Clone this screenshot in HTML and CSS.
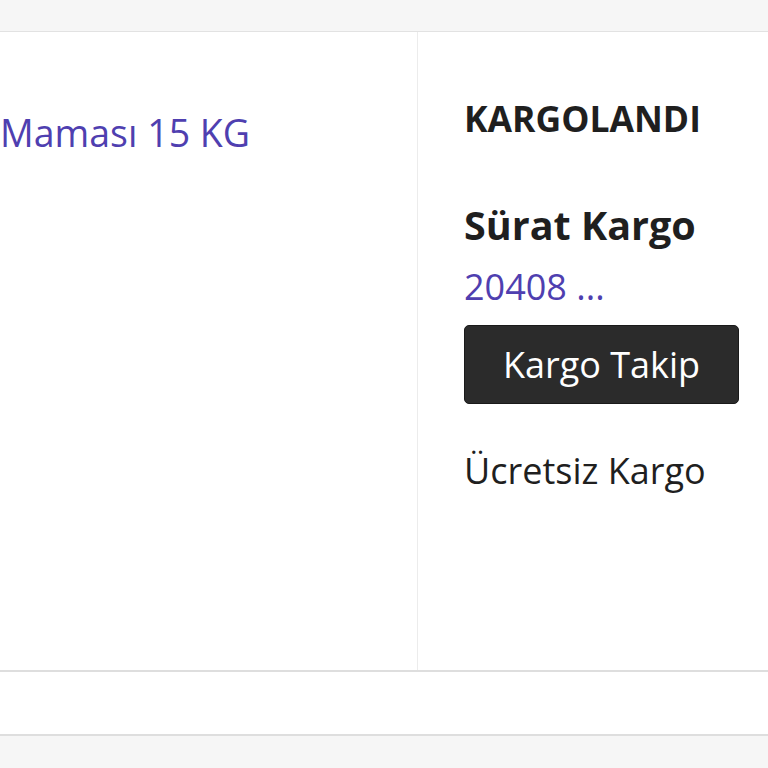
FILE: index.html
```html
<!DOCTYPE html>
<html lang="tr">
<head>
    <meta charset="UTF-8">
    <meta name="viewport" content="width=device-width, initial-scale=1.0">
    <title>Siparişlerim</title>
    <link rel="stylesheet" href="styles.css">
</head>
<body>
    <div class="page-top"></div>

    <div class="order-row">
        <div class="order-product">
            <a class="product-name" href="#">Maması 15 KG</a>
        </div>
        <div class="order-shipping">
            <div class="ship-status">KARGOLANDI</div>
            <div class="ship-company">Sürat Kargo</div>
            <a class="ship-code" href="#">20408 ...</a>
            <button class="track-btn">Kargo Takip</button>
            <div class="ship-fee">Ücretsiz Kargo</div>
        </div>
    </div>

    <div class="order-footer"></div>
</body>
</html>
```

FILE: styles.css
```css
body {
    margin: 0;
    font-family: 'Open Sans', 'Noto Sans', sans-serif;
    font-size: 36px;
    line-height: 61px;
    color: #1f1f1f;
    background-color: #f6f6f6;
}
a {
    color: #4f3fb0;
    text-decoration: none;
}
.page-top {
    height: 31px;
}
.order-row {
    display: grid;
    grid-template-columns: 418px 1fr;
    height: 638px;
    background-color: #fff;
    border-top: 1px solid #e2e2e2;
    border-bottom: 2px solid #dedede;
}
.order-product {
    border-right: 1px solid #ececec;
    padding-top: 70px;
    overflow: hidden;
    white-space: nowrap;
}
.product-name {
    font-size: 37.5px;
}
.order-shipping {
    padding: 56px 0 0 46px;
    display: flex;
    flex-direction: column;
    align-items: flex-start;
}
.ship-status {
    font-weight: 700;
    font-size: 35.5px;
    margin-bottom: 46px;
}
.ship-company {
    font-weight: 700;
    font-size: 39.5px;
}
.track-btn {
    margin-top: 8px;
    width: 275px;
    height: 79px;
    background-color: #2b2b2b;
    border: 1px solid #1a1a1a;
    border-radius: 5px;
    color: #fff;
    font-family: inherit;
    font-size: 36px;
    cursor: pointer;
}
.ship-fee {
    margin-top: 36px;
}
.order-footer {
    height: 62px;
    background-color: #fff;
    border-bottom: 2px solid #dedede;
}
```
